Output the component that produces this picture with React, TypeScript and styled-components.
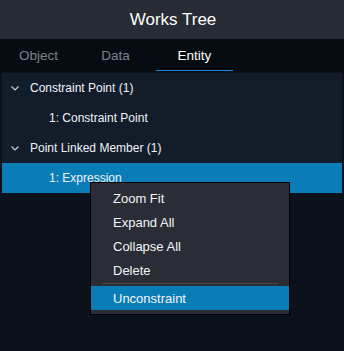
import styled, { createGlobalStyle } from "styled-components"

const GlobalStyle = createGlobalStyle`
    html, body {
        margin: 0;
        padding: 0;
        background-color: #0c121c;
        font-family: 'Liberation Sans', Arial, sans-serif;
    }
`

const Painel = styled.div`
    position: relative;
    width: 344px;
    height: 351px;
    background-color: #0c121c;
    overflow: hidden;
`
const Cabecalho = styled.header`
    height: 39px;
    background-color: #272b34;
    color: #fff;
    font-size: 17px;
    display: flex;
    align-items: center;
    justify-content: center;
    padding-left: 2px;
`
const Abas = styled.nav`
    height: 33px;
    background-color: #070c13;
    display: flex;
`
const Aba = styled.div<{ $ativa?: boolean }>`
    width: 77px;
    display: flex;
    align-items: center;
    justify-content: center;
    font-size: 13.5px;
    color: ${(p) => (p.$ativa ? "#fff" : "#7b838d")};
    box-shadow: ${(p) => (p.$ativa ? "inset 0 -1px 0 #070c13, inset 0 -2px 0 #1e88e5" : "none")};
    padding-bottom: 1px;
    margin-left: ${(p) => (p.$ativa ? "2px" : "0")};
    box-sizing: border-box;
`
const Arvore = styled.ul`
    list-style: none;
    margin: 1px 2px 0;
    padding: 0;
    background-color: #131c29;
`
const Linha = styled.li<{ $nivel: number; $selecionada?: boolean }>`
    height: 30px;
    display: flex;
    align-items: center;
    gap: 10px;
    padding-left: ${(p) => (p.$nivel === 0 ? "8px" : "47px")};
    font-size: 12px;
    color: #eef3f8;
    background-color: ${(p) => (p.$selecionada ? "#0b7db6" : "transparent")};
`
const Menu = styled.div`
    position: absolute;
    left: 90px;
    top: 182px;
    width: 198px;
    padding: 3px 0 4px;
    background-color: #2a2d36;
    border: 1px solid #000;
`
const ItemMenu = styled.div<{ $destaque?: boolean }>`
    height: 24px;
    display: flex;
    align-items: center;
    padding-left: 22px;
    font-size: 13px;
    color: #f2f5f8;
    background-color: ${(p) => (p.$destaque ? "#0b7db6" : "transparent")};
`
const Separador = styled.div`
    height: 1px;
    margin: 1px 11px 2px;
    background-color: #43464f;
`

function Seta() {
    return (
        <svg width="10" height="8" viewBox="0 0 10 8">
            <path d="M1.5 2.5 L5 6 L8.5 2.5" fill="none" stroke="#c9d0d8" strokeWidth="1.2" />
        </svg>
    )
}

function App() {
    return (
        <Painel>
            <GlobalStyle />
            <Cabecalho>Works Tree</Cabecalho>
            <Abas>
                <Aba>Object</Aba>
                <Aba>Data</Aba>
                <Aba $ativa>Entity</Aba>
            </Abas>
            <Arvore>
                <Linha $nivel={0}><Seta />Constraint Point (1)</Linha>
                <Linha $nivel={1}>1: Constraint Point</Linha>
                <Linha $nivel={0}><Seta />Point Linked Member (1)</Linha>
                <Linha $nivel={1} $selecionada>1: Expression</Linha>
            </Arvore>
            <Menu>
                <ItemMenu>Zoom Fit</ItemMenu>
                <ItemMenu>Expand All</ItemMenu>
                <ItemMenu>Collapse All</ItemMenu>
                <ItemMenu>Delete</ItemMenu>
                <Separador />
                <ItemMenu $destaque>Unconstraint</ItemMenu>
            </Menu>
        </Painel>
    )
}

export default App
